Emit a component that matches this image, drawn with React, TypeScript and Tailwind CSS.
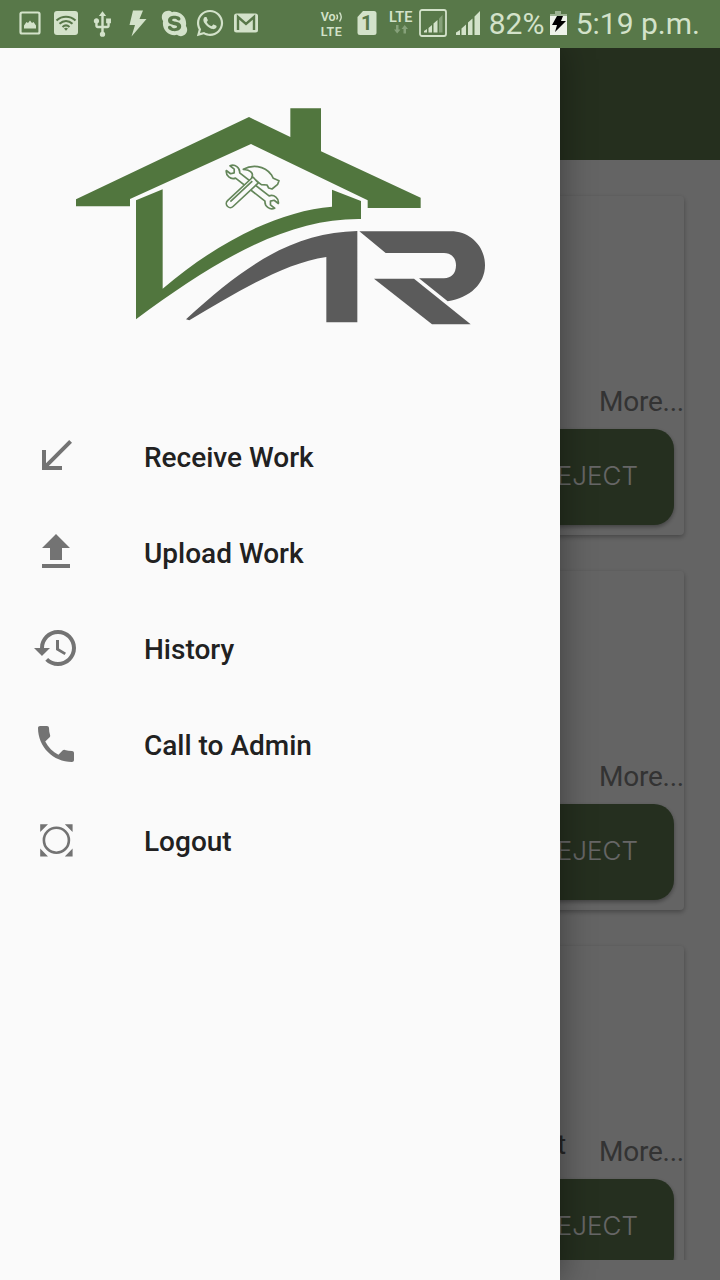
import React from "react";
import { FaSkype, FaWhatsapp } from "react-icons/fa";
import { MdUsb } from "react-icons/md";

interface MenuItem {
  label: string;
  icon: React.ReactNode;
}

const menuItems: MenuItem[] = [
  {
    label: "Receive Work",
    icon: <path d="M20 5.41L18.59 4 7 15.59V9H5v10h10v-2H8.41z" />,
  },
  {
    label: "Upload Work",
    icon: <path d="M9 16h6v-6h4l-7-7-7 7h4zm-4 2h14v2H5z" />,
  },
  {
    label: "History",
    icon: (
      <path d="M13 3c-4.97 0-9 4.03-9 9H1l3.89 3.89.07.14L9 12H6c0-3.87 3.13-7 7-7s7 3.13 7 7-3.13 7-7 7c-1.93 0-3.68-.79-4.94-2.06l-1.42 1.42C8.27 19.99 10.51 21 13 21c4.97 0 9-4.03 9-9s-4.03-9-9-9zm-1 5v5l4.28 2.54.72-1.21-3.5-2.08V8H12z" />
    ),
  },
  {
    label: "Call to Admin",
    icon: (
      <path d="M6.62 10.79c1.44 2.83 3.76 5.14 6.59 6.59l2.2-2.2c.27-.27.67-.36 1.02-.24 1.12.37 2.33.57 3.57.57.55 0 1 .45 1 1V20c0 .55-.45 1-1 1-9.39 0-17-7.61-17-17 0-.55.45-1 1-1h3.5c.55 0 1 .45 1 1 0 1.25.2 2.45.57 3.57.11.35.03.74-.25 1.02l-2.2 2.2z" />
    ),
  },
  {
    label: "Logout",
    icon: (
      <>
        <circle cx="12.2" cy="12.1" r="6.25" fill="none" stroke="currentColor" strokeWidth="1.3" />
        <path d="M4.1 4.1h3.9L4.1 8zM20.3 4.1v3.9l-3.9-3.9zM4.1 20.2v-3.9L8 20.2zM20.3 20.2h-3.9l3.9-3.9z" />
      </>
    ),
  },
];

const cards = [{ note: "" }, { note: "" }, { note: "t" }];

const StatusBar = () => (
  <header className="flex h-12 shrink-0 items-center bg-[#587849] pl-3 text-[#d3e2ca]">
    <div className="flex items-center">
      <div className="flex w-9 justify-center">
        <svg className="-mt-0.5" width="24" height="26" viewBox="0 0 24 26">
          <rect x="2.5" y="2.5" width="19" height="21" rx="1.5" fill="none" stroke="currentColor" strokeWidth="2.2" />
          <path d="M6 18.5v-3l2.500-3.500 1.500 1 2-2.500 2 2.500 1.500-1 2.500 3.500v3z" fill="currentColor" />
        </svg>
      </div>
      <div className="flex w-9 justify-center">
        <svg className="-mt-0.5" width="24" height="24" viewBox="0 0 24 24">
          <rect width="24" height="24" rx="3" fill="currentColor" />
          <g fill="none" stroke="#587849" strokeWidth="2">
            <path d="M2.5 9.5c5.5-5 13.5-5 19 0" />
            <path d="M5.5 12.8c4-3.6 9-3.6 13 0" />
            <path d="M8.5 16c2.2-2 4.8-2 7 0" />
          </g>
          <path d="M12 19.8l-2-2.3q2-1.3 4 0z" fill="#587849" />
        </svg>
      </div>
      <div className="flex w-9 justify-center">
        <MdUsb size={29} />
      </div>
      <div className="flex w-9 justify-center">
        <svg className="-mt-0.5" width="20" height="28" viewBox="0 0 20 28">
          <path d="M5 1.5h10L11.5 10h7L3.5 27.5 7 16H1.5z" fill="currentColor" />
        </svg>
      </div>
      <div className="flex w-9 justify-center">
        <FaSkype className="-mt-0.5" size={29} />
      </div>
      <div className="flex w-9 justify-center">
        <FaWhatsapp className="-mt-0.5" size={30} />
      </div>
      <div className="flex w-9 justify-center">
        <svg className="-mt-0.5" width="24" height="20" viewBox="0 0 24 20">
          <rect width="24" height="19" y="0.5" rx="2.5" fill="currentColor" />
          <path d="M4 17V4l8 7 8-7v13" fill="none" stroke="#587849" strokeWidth="2.4" />
        </svg>
      </div>
    </div>

    <div className="ml-auto flex items-center pr-5 font-[Roboto,sans-serif]">
      <div className="mr-3 flex w-6 flex-col text-[12.5px] leading-[15px] font-semibold">
        <span className="flex items-center">
          Vo
          <svg width="9" height="12" viewBox="0 0 9 12" fill="none" stroke="currentColor" strokeWidth="1.4">
            <path d="M0.500 3.500q2 2.500 0 5M3.500 1.500q3.500 4.500 0 9" />
          </svg>
        </span>
        <span className="tracking-[0.5px]">LTE</span>
      </div>
      <div className="relative mr-3 -mt-0.5 flex h-6 w-5 items-center justify-center">
        <svg className="absolute inset-0" width="20" height="24" viewBox="0 0 20 24">
          <path d="M6 0h11q2.500 0 2.500 2.500v19q0 2.500-2.500 2.500H3q-2.500 0-2.500-2.500V6z" fill="currentColor" />
        </svg>
        <span className="relative text-[20px] leading-6 font-bold text-[#587849]">1</span>
      </div>
      <div className="mr-1.5 -mt-1 flex w-6 flex-col items-center">
        <span className="text-[14.5px] leading-[14px] font-semibold">LTE</span>
        <svg width="14" height="9" viewBox="0 0 14 9" fill="#86a17a">
          <path d="M2 0h2.500v4.500h2L3.200 8.500 0 4.500h2zM9.500 8.500H12V4h2L10.700 0 7.500 4h2z" />
        </svg>
      </div>
      <svg className="mr-2 -mt-0.5" width="28" height="28" viewBox="0 0 28 28">
        <rect x="1" y="1" width="26" height="26" rx="2" fill="none" stroke="currentColor" strokeWidth="1.8" />
        <path d="M5 23.500v-1.500l3-2v3.500zM9.500 23.500v-4.500l3.500-3v7.500zM14.500 23.500v-9l4-3.500v12.500z" fill="currentColor" />
        <path d="M20 23.500V9.500l3.500-3.500v17.500z" fill="#86a17a" />
      </svg>
      <svg className="mr-2 -mt-0.5" width="26" height="26" viewBox="0 0 26 26" fill="currentColor">
        <path d="M1 25v-2.500l4-2.500v5zM6.500 25v-6.500l4.500-4V25zM13 25V12.500l4.500-4V25zM19.500 25V6.500L25 1v24z" />
      </svg>
      <span className="w-[61px] text-[30px] leading-9">82%</span>
      <svg className="mr-[9px]" width="17" height="26" viewBox="0 0 17 26">
        <path d="M5 0h6v3h6v5H0V3h5z" fill="#9cb392" />
        <path d="M0 5h17v19H0z" fill="#eef3ea" />
        <path d="M7 5h6l-2 5h5L5 21l2-7H2z" fill="#000" />
      </svg>
      <span className="text-[30px] leading-9">5:19 p.m.</span>
    </div>
  </header>
);

const WorkCard = ({ note }: { note: string }) => (
  <div className="flex h-[339px] shrink-0 flex-col items-end rounded bg-[#fafafa] pb-2.5 shadow-[0_2px_5px_rgba(0,0,0,0.3)]">
    <div className="mt-auto mb-[9px] flex h-9 items-center text-[28px] leading-9 text-[#808080]">
      <span className="mr-[33px] -mt-3.5 text-[#606060]">{note}</span>
      <span className="tracking-[-0.25px]">More...</span>
    </div>
    <button className="mr-2.5 h-24 w-[204px] shrink-0 rounded-[20px] bg-[#5c774e] pr-9 pb-1 text-right font-[Inter,sans-serif] text-[26px] font-[350] text-white shadow-[0_2px_4px_rgba(0,0,0,0.35)]">
      REJECT
    </button>
  </div>
);

const Logo = () => (
  <svg width="440" height="250" viewBox="0 0 1320 750">
    <g fill="#51763e">
      <path d="M48 328L567 81 691 141V55h92v129l299 139v31H923v-23L573 162 210 327v22H48z" />
      <path d="M228 331l80-33v298C480 450 660 363 816 350v-51l87 34v54C690 384 480 500 228 688z" />
    </g>
    <g fill="#5b5b5b">
      <path d="M378 688C570 510 710 428 892 423v274h-93V501C670 520 530 607 388 691z" />
      <path d="M898 424h274c60 0 103 46 103 102 0 55-45 98-112 108l-86-69h75c22 0 36-15 36-39 0-22-14-37-36-37H977z" />
      <path d="M942 566h120l170 137h-116z" />
    </g>
    <g fill="#fafafa" stroke="#64865a" strokeWidth="5" strokeLinejoin="round">
      {/* wrench */}
      <path
        transform="translate(577 291) rotate(38)"
        d="M-92-9A21 21 0 0 1-56-10L56-10A21 21 0 0 1 92-9L76-9 69 0 76 9 92 9A21 21 0 0 1 56 10L-56 10A21 21 0 0 1-92 9L-76 9-69 0-76-9z"
      />
      {/* hammer */}
      <path d="M550 238C575 224 612 225 634 254L640 265 657 272 653 283 636 297 626 294 621 285 604 284 575 262C582 250 572 240 550 238z" />
      <path transform="translate(546 308) rotate(-43)" d="M-48-12H56V12H-48A12 12 0 0 1-48-12zM-44-4H46" />
    </g>
  </svg>
);

const Drawer = () => (
  <aside className="absolute inset-y-0 left-0 flex w-[560px] flex-col bg-[#fafafa] shadow-[0_0_32px_rgba(0,0,0,0.4)]">
    <div className="h-[360px] pt-[42px] pl-[60px]">
      <Logo />
    </div>
    <nav className="flex flex-col">
      {menuItems.map((item) => (
        <a key={item.label} className="flex h-24 items-center gap-16 pl-8">
          <svg className="text-[#737373]" width="48" height="48" viewBox="0 0 24 24" fill="currentColor">
            {item.icon}
          </svg>
          <span className="pt-1 text-[28px] leading-9 font-medium text-[#212121]">{item.label}</span>
        </a>
      ))}
    </nav>
  </aside>
);

const App = () => {
  return (
    <div className="flex h-[1280px] w-[720px] flex-col overflow-hidden bg-[#fafafa] font-[Roboto,sans-serif]">
      <StatusBar />
      <div className="relative flex min-h-0 flex-1 flex-col overflow-hidden">
        <div className="h-28 shrink-0 bg-[#5c754d]" />
        <main className="mb-5 flex min-h-0 flex-1 flex-col gap-9 overflow-hidden px-9 pt-9">
          {cards.map((card, index) => (
            <WorkCard key={index} note={card.note} />
          ))}
        </main>
        <div className="absolute inset-0 bg-black/60" />
        <Drawer />
      </div>
    </div>
  );
};

export default App;
